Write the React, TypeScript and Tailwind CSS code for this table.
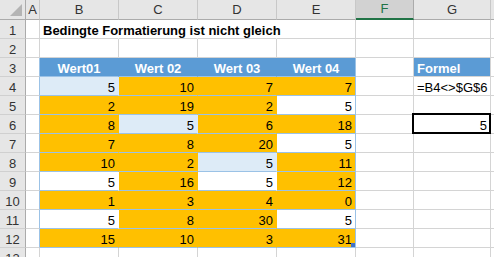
import React from 'react';

type Fill = 'o' | 'b' | 'w';

// values and fill of B4:E12
const tableRows: [number, Fill][][] = [
  [[5, 'b'], [10, 'o'], [7, 'o'], [7, 'o']],
  [[2, 'o'], [19, 'o'], [2, 'o'], [5, 'w']],
  [[8, 'o'], [5, 'b'], [6, 'o'], [18, 'o']],
  [[7, 'o'], [8, 'o'], [20, 'o'], [5, 'w']],
  [[10, 'o'], [2, 'o'], [5, 'b'], [11, 'o']],
  [[5, 'w'], [16, 'o'], [5, 'w'], [12, 'o']],
  [[1, 'o'], [3, 'o'], [4, 'o'], [0, 'o']],
  [[5, 'w'], [8, 'o'], [30, 'o'], [5, 'w']],
  [[15, 'o'], [10, 'o'], [3, 'o'], [31, 'o']],
];

const fillClass: Record<Fill, string> = {
  o: 'bg-[#ffc000] border-r-[#ffc000]',
  b: 'bg-[#ddebf7] border-r-[#ddebf7]',
  w: 'bg-white border-r-white',
};

const colHeads = ['A', 'B', 'C', 'D', 'E', 'F', 'G'];

function RowHead({ n }: { n: number }) {
  return (
    <div className="flex items-end justify-center border-r border-b border-r-[#ababab] border-b-[#d0d0d0] bg-[#e6e6e6] text-[13px] leading-[15px] text-[#333]">
      {n}
    </div>
  );
}

function Cell({ className = '', children }: { className?: string; children?: React.ReactNode }) {
  return (
    <div className={`relative flex items-end border-r border-b border-[#d4d4d4] px-[3px] text-[13px] leading-[15px] text-black ${className}`}>
      {children}
    </div>
  );
}

export default function App() {
  return (
    <div className="h-[278px] w-[494px] overflow-hidden bg-white font-['Liberation_Sans',Arial,sans-serif]">
      {/* sheet is cut off partway through row 13 */}
      <div className="h-[257px] overflow-hidden">
        <div className="grid grid-cols-[26px_14px_79px_79px_79px_79px_58px_77px_3px] grid-rows-[20px_repeat(13,19px)]">
          {/* column headers */}
          <div className="relative border-r border-b border-r-[#ababab] border-b-[#ababab] bg-[#e6e6e6]">
            <svg className="absolute right-[3px] bottom-[3px]" width="12" height="12" viewBox="0 0 12 12">
              <polygon points="12,0 12,12 0,12" fill="#b4b4b4" />
            </svg>
          </div>
          {colHeads.map((c) =>
            c === 'F' ? (
              <div
                key={c}
                className="flex items-center justify-center border-r border-b-2 border-r-[#ababab] border-b-[#217346] bg-[#d2d2d2] text-[13px] text-[#217346]"
              >
                {c}
              </div>
            ) : (
              <div
                key={c}
                className="flex items-center justify-center border-r border-b border-r-[#c8c8c8] border-b-[#ababab] bg-[#e6e6e6] text-[13px] text-[#333]"
              >
                {c}
              </div>
            ),
          )}
          <div className="border-b border-b-[#ababab] bg-[#e6e6e6]" />

          {/* row 1: title spills over C1:E1 */}
          <RowHead n={1} />
          <Cell />
          <Cell className="z-10 border-r-transparent">
            <span className="whitespace-nowrap font-bold">Bedingte Formatierung ist nicht gleich</span>
          </Cell>
          <Cell className="border-r-transparent" />
          <Cell className="border-r-transparent" />
          <Cell />
          <Cell />
          <Cell />
          <Cell className="border-r-0" />

          {/* row 2 */}
          <RowHead n={2} />
          {Array.from({ length: 7 }).map((_, i) => (
            <Cell key={i} />
          ))}
          <Cell className="border-r-0" />

          {/* row 3: table header + Formel */}
          <RowHead n={3} />
          <Cell className="border-r-[#9bc2e6]" />
          {['Wert01', 'Wert 02', 'Wert 03', 'Wert 04'].map((h, i) => (
            <Cell
              key={h}
              className={`justify-center border-b-[#9bc2e6] bg-[#5b9bd5] font-bold text-white ${
                i === 3 ? 'border-r-[#9bc2e6]' : 'border-r-[#5b9bd5]'
              }`}
            >
              {h}
            </Cell>
          ))}
          <Cell />
          <Cell className="bg-[#5b9bd5] font-bold text-white">Formel</Cell>
          <Cell className="border-r-0" />

          {/* rows 4-12 */}
          {tableRows.map((row, r) => {
            const n = r + 4;
            return (
              <React.Fragment key={n}>
                <RowHead n={n} />
                <Cell className="border-r-[#9bc2e6]" />
                {row.map(([v, f], i) => (
                  <Cell
                    key={i}
                    className={`justify-end border-b-[#9bc2e6] ${fillClass[f]} ${i === 3 ? '!border-r-[#9bc2e6]' : ''}`}
                  >
                    {v}
                    {n === 12 && i === 3 && (
                      <span className="absolute right-0 bottom-0 h-[4px] w-[4px] bg-[#4472c4]" />
                    )}
                  </Cell>
                ))}
                <Cell />
                {n === 4 ? (
                  <Cell className="overflow-visible whitespace-nowrap">=B4&lt;&gt;$G$6</Cell>
                ) : n === 6 ? (
                  <Cell className="justify-end">
                    5
                    <span className="absolute -top-[2px] -left-[2px] -right-[1px] -bottom-[1px] border-2 border-black" />
                  </Cell>
                ) : (
                  <Cell />
                )}
                <Cell className="border-r-0" />
              </React.Fragment>
            );
          })}

          {/* row 13 */}
          <RowHead n={13} />
          {Array.from({ length: 7 }).map((_, i) => (
            <Cell key={i} />
          ))}
          <Cell className="border-r-0" />
        </div>
      </div>
    </div>
  );
}
